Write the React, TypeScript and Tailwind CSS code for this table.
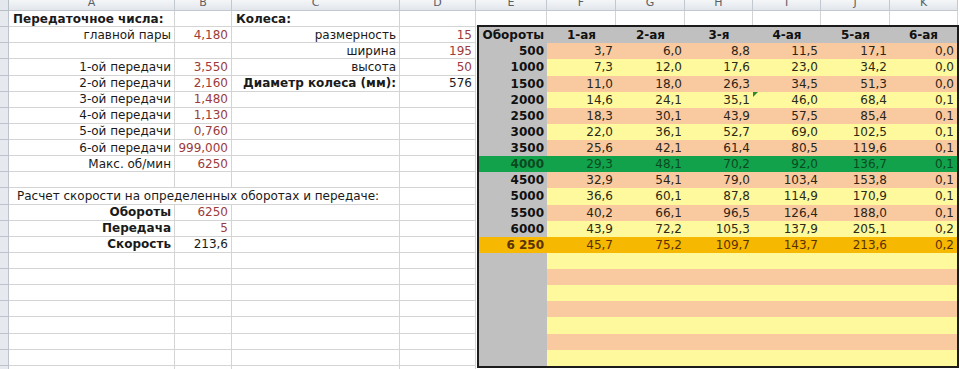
const rowH = "h-[16.13px]";

type LeftRow = {
    a?: string;
    aBold?: boolean;
    aLeft?: boolean;
    b?: string;
    bRed?: boolean;
    c?: string;
    cBold?: boolean;
    cLeft?: boolean;
    d?: string;
    dRed?: boolean;
    span?: string;
};

const leftRows: LeftRow[] = [
    { a: "Передаточное числа:", aBold: true, aLeft: true, c: "Колеса:", cBold: true, cLeft: true },
    { a: "главной пары", b: "4,180", bRed: true, c: "размерность", d: "15", dRed: true },
    { c: "ширина", d: "195", dRed: true },
    { a: "1-ой передачи", b: "3,550", bRed: true, c: "высота", d: "50", dRed: true },
    { a: "2-ой передачи", b: "2,160", bRed: true, c: "Диаметр колеса (мм):", cBold: true, d: "576" },
    { a: "3-ой передачи", b: "1,480", bRed: true },
    { a: "4-ой передачи", b: "1,130", bRed: true },
    { a: "5-ой передачи", b: "0,760", bRed: true },
    { a: "6-ой передачи", b: "999,000", bRed: true },
    { a: "Макс. об/мин", b: "6250", bRed: true },
    {},
    { span: "Расчет скорости на определенных оборотах и передаче:" },
    { a: "Обороты", aBold: true, b: "6250", bRed: true },
    { a: "Передача", aBold: true, b: "5", bRed: true },
    { a: "Скорость", aBold: true, b: "213,6" },
    {},
    {},
    {},
    {},
    {},
    {},
    {},
    {},
];

const speeds: string[][] = [
    ["500", "3,7", "6,0", "8,8", "11,5", "17,1", "0,0"],
    ["1000", "7,3", "12,0", "17,6", "23,0", "34,2", "0,0"],
    ["1500", "11,0", "18,0", "26,3", "34,5", "51,3", "0,0"],
    ["2000", "14,6", "24,1", "35,1", "46,0", "68,4", "0,1"],
    ["2500", "18,3", "30,1", "43,9", "57,5", "85,4", "0,1"],
    ["3000", "22,0", "36,1", "52,7", "69,0", "102,5", "0,1"],
    ["3500", "25,6", "42,1", "61,4", "80,5", "119,6", "0,1"],
    ["4000", "29,3", "48,1", "70,2", "92,0", "136,7", "0,1"],
    ["4500", "32,9", "54,1", "79,0", "103,4", "153,8", "0,1"],
    ["5000", "36,6", "60,1", "87,8", "114,9", "170,9", "0,1"],
    ["5500", "40,2", "66,1", "96,5", "126,4", "188,0", "0,1"],
    ["6000", "43,9", "72,2", "105,3", "137,9", "205,1", "0,2"],
    ["6 250", "45,7", "75,2", "109,7", "143,7", "213,6", "0,2"],
];

const gears = ["1-ая", "2-ая", "3-я", "4-ая", "5-ая", "6-ая"];

// inner widths of F..K inside the outlined block
const tableCols = ["w-[69px]", "w-[69px]", "w-[68px]", "w-[68px]", "w-[69px]", "w-[67px]"];

const headers = [
    { label: "A", w: "w-[166px]" },
    { label: "B", w: "w-[57px]" },
    { label: "C", w: "w-[168px]" },
    { label: "D", w: "w-[76px]" },
    { label: "E", w: "w-[71px]" },
    { label: "F", w: "w-[69px]" },
    { label: "G", w: "w-[69px]" },
    { label: "H", w: "w-[68px]" },
    { label: "I", w: "w-[68px]" },
    { label: "J", w: "w-[69px]" },
    { label: "K", w: "w-[68px]" },
];

function Cell({
    w,
    text,
    bold,
    left,
    red,
}: {
    w: string;
    text?: string;
    bold?: boolean;
    left?: boolean;
    red?: boolean;
}) {
    return (
        <div
            className={`${w} flex shrink-0 items-center overflow-visible whitespace-nowrap border-r border-b border-[#d4d4d4] ${
                left ? "justify-start pl-[4px]" : "justify-end pr-[3px]"
            } ${bold ? "font-bold" : ""} ${red ? "text-[#9b3b3b]" : "text-[#1a1a1a]"}`}
        >
            {text}
        </div>
    );
}

function SheetRow({ row }: { row: LeftRow }) {
    return (
        <div className={`flex shrink-0 ${rowH}`}>
            <div className="w-[9px] shrink-0 border-r border-b border-[#bcc3cc] bg-[#e6eaef]" />
            {row.span ? (
                <div className="flex w-[391px] shrink-0 items-center whitespace-nowrap border-r border-b border-[#d4d4d4] pl-[8px] text-[#1a1a1a]">
                    {row.span}
                </div>
            ) : (
                <>
                    <Cell w="w-[166px]" text={row.a} bold={row.aBold} left={row.aLeft} />
                    <Cell w="w-[57px]" text={row.b} red={row.bRed} />
                    <Cell w="w-[168px]" text={row.c} bold={row.cBold} left={row.cLeft} />
                </>
            )}
            <Cell w="w-[76px]" text={row.d} red={row.dRed} />
        </div>
    );
}

function rowStyle(i: number) {
    if (i === 7) return { bg: "bg-[#12a24c]", text: "text-[#0b4a20]", head: "bg-[#12a24c] text-[#0b4a20]" };
    if (i === 12) return { bg: "bg-[#f6b800]", text: "text-[#5a3200]", head: "bg-[#f6b800] text-[#5a3200]" };
    if (i % 2 === 0) return { bg: "bg-[#f9caa0]", text: "text-[#2b2518]", head: "bg-[#c0c0c0] text-[#111111]" };
    return { bg: "bg-[#fef99c]", text: "text-[#2b2a18]", head: "bg-[#c0c0c0] text-[#111111]" };
}

function SpeedTable() {
    const blanks = Array.from({ length: 7 }, (_, i) => i + 13);

    return (
        <div className="ml-[3px] flex w-[478px] flex-col outline-2 outline-[#1c1c1c]">
            <div className={`flex ${rowH} bg-[#c0c0c0] font-bold text-[#111111]`}>
                <div className="flex w-[68px] items-center justify-end pr-[3px]">Обороты</div>
                {gears.map((g, i) => (
                    <div key={g} className={`${tableCols[i]} flex items-center justify-center`}>
                        {g}
                    </div>
                ))}
            </div>

            {speeds.map((r, i) => {
                const s = rowStyle(i);
                return (
                    <div key={r[0]} className={`flex ${rowH}`}>
                        <div className={`flex w-[68px] items-center justify-end pr-[3px] font-bold ${s.head}`}>
                            {r[0]}
                        </div>
                        {r.slice(1).map((v, j) => (
                            <div
                                key={j}
                                className={`${tableCols[j]} relative flex items-center justify-end pr-[3px] ${s.bg} ${s.text}`}
                            >
                                {i === 3 && j === 3 && (
                                    <span className="absolute top-0 left-0 h-0 w-0 border-t-[5px] border-r-[5px] border-t-[#2f8a2f] border-r-transparent" />
                                )}
                                {v}
                            </div>
                        ))}
                    </div>
                );
            })}

            {blanks.map((i) => (
                <div key={i} className={`flex ${rowH}`}>
                    <div className="w-[68px] bg-[#c0c0c0]" />
                    <div className={`flex-1 ${i % 2 === 0 ? "bg-[#f9caa0]" : "bg-[#fef99c]"}`} />
                </div>
            ))}
        </div>
    );
}

export default function App() {
    return (
        <div className="h-[369px] w-[960px] overflow-hidden bg-white font-['DejaVu_Sans',sans-serif] text-[12px] leading-none">
            <div className="flex h-[11px]">
                <div className="w-[9px] shrink-0 border-r border-b border-[#b8bec6] bg-[#e4e8ee]" />
                {headers.map((h) => (
                    <div
                        key={h.label}
                        className={`${h.w} flex shrink-0 items-end justify-center overflow-hidden border-r border-b border-[#c2c8cf] bg-gradient-to-b from-[#f4f6f8] to-[#e2e6eb] pb-[2px] text-[11px] text-[#5a5f66]`}
                    >
                        {h.label}
                    </div>
                ))}
            </div>

            <div className="flex">
                <div className="flex w-[476px] shrink-0 flex-col">
                    {leftRows.map((row, i) => (
                        <SheetRow key={i} row={row} />
                    ))}
                </div>

                <div className="flex flex-col">
                    <div className={`flex ${rowH}`}>
                        {headers.slice(4).map((h) => (
                            <div key={h.label} className={`${h.w} shrink-0 border-r border-b border-[#d4d4d4]`} />
                        ))}
                    </div>
                    <SpeedTable />
                </div>
            </div>
        </div>
    );
}
